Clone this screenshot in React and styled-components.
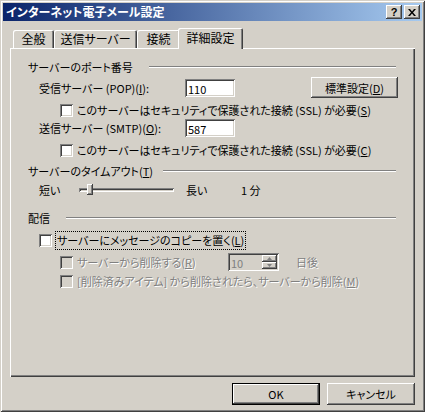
import React from 'react';
import styled, { createGlobalStyle, css } from 'styled-components';

const face = '#d4d0c8';

const GlobalStyle = createGlobalStyle`
  html, body {
    margin: 0;
    padding: 0;
    background: ${face};
  }
  body {
    font-family: "Noto Sans CJK JP", "Noto Sans", sans-serif;
    font-size: 11px;
    font-feature-settings: "palt";
    color: #000;
  }
`;

const raised = css`
  box-shadow: inset -1px -1px #404040, inset 1px 1px #fff, inset -2px -2px #808080, inset 2px 2px ${face};
`;

const sunken = css`
  box-shadow: inset 1px 1px #808080, inset -1px -1px #fff, inset 2px 2px #404040, inset -2px -2px ${face};
`;

const Window = styled.div`
  width: 425px;
  height: 412px;
  box-sizing: border-box;
  padding: 3px;
  background: ${face};
  box-shadow: inset 1px 1px ${face}, inset -1px -1px #404040, inset 2px 2px #fff, inset -2px -2px #808080;
  display: flex;
  flex-direction: column;
`;

const TitleBar = styled.div`
  height: 18px;
  display: flex;
  align-items: center;
  padding: 0 2px 0 3px;
  background: linear-gradient(to right, #0a246a, #a6caf0);
  color: #fff;
  font-weight: bold;
  font-size: 12px;
  line-height: 18px;
`;

const TitleText = styled.span`
  flex: 1;
  white-space: nowrap;
`;

const CaptionButton = styled.div`
  width: 16px;
  height: 14px;
  box-sizing: border-box;
  background: ${face};
  ${raised};
  display: flex;
  align-items: center;
  justify-content: center;
  color: #000;
  font-family: "Liberation Sans", Arial, sans-serif;
  font-weight: bold;
  font-size: 11px;
  line-height: 1;
  margin-left: ${p => p.$gap || 0}px;
`;

const Body = styled.div`
  flex: 1;
  display: flex;
  flex-direction: column;
  padding: 7px 7px 0 7px;
`;

const TabStrip = styled.div`
  display: flex;
  align-items: flex-end;
  height: 20px;
  padding-left: 3px;
  position: relative;
  z-index: 1;
`;

const Tab = styled.div`
  width: ${p => p.$w}px;
  height: ${p => (p.$active ? 21 : 18)}px;
  box-sizing: border-box;
  margin-bottom: ${p => (p.$active ? -1 : 0)}px;
  margin-left: ${p => (p.$active ? -2 : 0)}px;
  margin-right: ${p => (p.$active ? -1 : 0)}px;
  background: ${face};
  border-radius: 2px 2px 0 0;
  box-shadow: inset 1px 1px #fff, inset -1px 0 #404040, inset -2px 0 #808080;
  display: flex;
  align-items: center;
  justify-content: center;
  padding-bottom: ${p => (p.$active ? 2 : 0)}px;
  font-size: 12px;
  line-height: 14px;
  white-space: nowrap;
`;

const Panel = styled.div`
  height: 329px;
  box-sizing: border-box;
  background: ${face};
  box-shadow: inset 1px 1px #fff, inset -1px -1px #404040, inset -2px -2px #808080;
  padding: 12px 17px 0 18px;
  display: flex;
  flex-direction: column;
`;

const GroupHeader = styled.div`
  display: flex;
  align-items: center;
  height: 14px;
  line-height: 14px;
  margin-top: ${p => p.$top}px;
  white-space: nowrap;
`;

const Etch = styled.div`
  flex: 1;
  height: 0;
  border-top: 1px solid #808080;
  border-bottom: 1px solid #fff;
  margin: 0 2px 0 ${p => p.$lead || 8}px;
`;

const Row = styled.div`
  display: flex;
  align-items: center;
  height: ${p => p.$h}px;
  margin-top: ${p => p.$top}px;
  padding-left: ${p => p.$indent}px;
  line-height: 14px;
  white-space: nowrap;
`;

const Label = styled.span`
  width: ${p => (p.$w ? `${p.$w}px` : 'auto')};
  flex-shrink: 0;
  margin-left: ${p => p.$ml || 0}px;
  color: ${p => (p.$disabled ? '#808080' : '#000')};
  text-shadow: ${p => (p.$disabled ? '1px 1px 0 #fff' : 'none')};
`;

const TextBox = styled.div`
  width: ${p => p.$w || 50}px;
  height: 18px;
  box-sizing: border-box;
  background: ${p => (p.$disabled ? face : '#fff')};
  ${sunken};
  padding: 2px 3px 0 3px;
  line-height: 14px;
  color: ${p => (p.$disabled ? '#808080' : '#000')};
  display: flex;
  align-items: center;
  position: relative;
`;

const SpinGroup = styled.div`
  display: flex;
  flex-direction: column;
  position: absolute;
  right: 2px;
  top: 2px;
`;

const SpinButton = styled.div`
  width: 15px;
  height: 7px;
  box-sizing: border-box;
  background: ${face};
  ${raised};
  display: flex;
  align-items: center;
  justify-content: center;
`;

const PushButton = styled.div`
  width: ${p => p.$w}px;
  height: ${p => p.$h}px;
  box-sizing: border-box;
  background: ${face};
  ${raised};
  ${p => p.$default && css`
    border: 1px solid #000;
  `}
  display: flex;
  align-items: center;
  justify-content: center;
  line-height: 14px;
  margin-left: ${p => (p.$push ? 'auto' : `${p.$ml || 0}px`)};
`;

const Check = styled.div`
  width: 13px;
  height: 13px;
  flex-shrink: 0;
  box-sizing: border-box;
  background: ${p => (p.$disabled ? face : '#fff')};
  ${sunken};
  margin-right: 4px;
`;

const Focus = styled.span`
  outline: 1px dotted #000;
  outline-offset: 0;
  padding: 1px 1px 2px 1px;
`;

const Track = styled.div`
  width: 95px;
  height: 4px;
  box-sizing: border-box;
  ${sunken};
  background: ${face};
  position: relative;
  flex-shrink: 0;
`;

const Thumb = styled.div`
  position: absolute;
  left: 8px;
  top: -4px;
  width: 6px;
  height: 11px;
  box-sizing: border-box;
  background: ${face};
  ${raised};
`;

const ButtonBar = styled.div`
  display: flex;
  justify-content: flex-end;
  margin-top: 6px;
`;

const Arrow = ({ up }) => (
  <svg width="5" height="3" viewBox="0 0 5 3">
    <path d={up ? 'M2.5 0 L5 3 L0 3 Z' : 'M0 0 L5 0 L2.5 3 Z'} fill="#808080" />
  </svg>
);

export default function App() {
  return (
    <>
      <GlobalStyle />
      <Window>
        <TitleBar>
          <TitleText>インターネット電子メール設定</TitleText>
          <CaptionButton>?</CaptionButton>
          <CaptionButton $gap={2}>
            <svg width="8" height="7" viewBox="0 0 8 7">
              <path d="M0 0 L2 0 L4 2.5 L6 0 L8 0 L5 3.5 L8 7 L6 7 L4 4.5 L2 7 L0 7 L3 3.5 Z" fill="#000" />
            </svg>
          </CaptionButton>
        </TitleBar>
        <Body>
          <TabStrip>
            <Tab $w={41}>全般</Tab>
            <Tab $w={83}>送信サーバー</Tab>
            <Tab $w={43}>接続</Tab>
            <Tab $w={65} $active>詳細設定</Tab>
          </TabStrip>
          <Panel>
            <GroupHeader $top={0}>
              サーバーのポート番号
              <Etch $lead={16} />
            </GroupHeader>
            <Row $h={21} $top={3} $indent={11}>
              <Label $w={146}>受信サーバー (POP)(<u>I</u>):</Label>
              <TextBox>110</TextBox>
              <PushButton $w={87} $h={21} $push>
                標準設定(<u>D</u>)
              </PushButton>
            </Row>
            <Row $h={16} $top={4} $indent={32}>
              <Check />
              <Label>このサーバーはセキュリティで保護された接続 (SSL) が必要(<u>S</u>)</Label>
            </Row>
            <Row $h={18} $top={1} $indent={11}>
              <Label $w={146}>送信サーバー (SMTP)(<u>O</u>):</Label>
              <TextBox>587</TextBox>
            </Row>
            <Row $h={16} $top={5} $indent={32}>
              <Check />
              <Label>このサーバーはセキュリティで保護された接続 (SSL) が必要(<u>C</u>)</Label>
            </Row>
            <GroupHeader $top={6}>
              サーバーのタイムアウト(<u>T</u>)
              <Etch $lead={10} />
            </GroupHeader>
            <Row $h={18} $top={3} $indent={11}>
              <Label $w={40}>短い</Label>
              <Track>
                <Thumb />
              </Track>
              <Label $w={55} $ml={12}>長い</Label>
              <Label>1 分</Label>
            </Row>
            <GroupHeader $top={12}>
              配信
              <Etch $lead={16} />
            </GroupHeader>
            <Row $h={18} $top={6} $indent={11}>
              <Check />
              <Focus>サーバーにメッセージのコピーを置く(<u>L</u>)</Focus>
            </Row>
            <Row $h={18} $top={4} $indent={32}>
              <Check $disabled />
              <Label $w={151} $disabled>サーバーから削除する(<u>R</u>)</Label>
              <TextBox $disabled $w={51}>
                10
                <SpinGroup>
                  <SpinButton><Arrow up /></SpinButton>
                  <SpinButton><Arrow /></SpinButton>
                </SpinGroup>
              </TextBox>
              <Label $ml={17} $disabled>日後</Label>
            </Row>
            <Row $h={16} $top={2} $indent={32}>
              <Check $disabled />
              <Label $disabled>[削除済みアイテム] から削除されたら、サーバーから削除(<u>M</u>)</Label>
            </Row>
          </Panel>
          <ButtonBar>
            <PushButton $w={88} $h={22} $default>OK</PushButton>
            <PushButton $w={88} $h={22} $ml={7}>キャンセル</PushButton>
          </ButtonBar>
        </Body>
      </Window>
    </>
  );
}
